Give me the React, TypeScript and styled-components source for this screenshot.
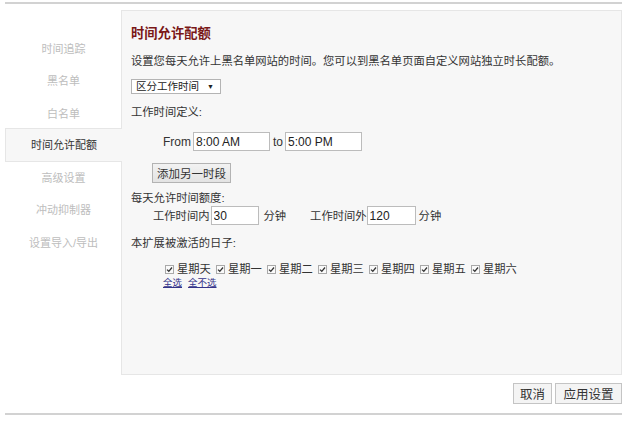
import React from "react";
import styled, { createGlobalStyle } from "styled-components";

const Global = createGlobalStyle`
  html, body { margin: 0; padding: 0; background: #fff; }
  body { font-family: "Liberation Sans", "Noto Sans CJK SC", sans-serif; color: #333; font-size: 11.3px; }
`;

const Page = styled.div`
  width: 617px;
  margin-left: 5px;
  padding-top: 2px;
`;

const Rule = styled.div`
  height: 0;
  border-top: 2px solid #d2d2d2;
`;

const Body = styled.div`
  display: flex;
  margin-top: 6px;
  height: 365px;
`;

const Sidebar = styled.nav`
  width: 116px;
  flex: none;
  padding-top: 22px;
  display: flex;
  flex-direction: column;
  position: relative;
  z-index: 1;
`;

const NavItem = styled.div<{ $active?: boolean }>`
  height: 32.4px;
  line-height: 32.4px;
  text-align: center;
  font-size: 11px;
  color: ${(p) => (p.$active ? "#333" : "#bdbdbd")};
  background: ${(p) => (p.$active ? "#f7f7f7" : "transparent")};
  border: 1px solid ${(p) => (p.$active ? "#e6e6e6" : "transparent")};
  border-right: none;
  margin-right: ${(p) => (p.$active ? "-1px" : "0")};
  box-sizing: border-box;
  ${(p) => p.$active && "height: 34px; line-height: 32px; margin-top: -1px; margin-bottom: -1.2px;"}
`;

const Panel = styled.section`
  flex: 1;
  background: #f7f7f7;
  border: 1px solid #e6e6e6;
  padding: 12px 10px 0 9px;
  box-sizing: border-box;
`;

const Title = styled.h2`
  margin: 0;
  font-size: 13.3px;
  line-height: 20px;
  font-weight: bold;
  color: #7a1717;
  font-family: "Noto Sans CJK SC", sans-serif;
`;

const Line = styled.div<{ $mt: number; $indent?: number }>`
  margin-top: ${(p) => p.$mt}px;
  padding-left: ${(p) => p.$indent ?? 0}px;
  line-height: 16px;
  display: flex;
  align-items: center;
  white-space: nowrap;
`;

const SelectBox = styled.div`
  margin-top: 10px;
  width: 90px;
  height: 15px;
  box-sizing: border-box;
  border: 1px solid #b4b4b4;
  background: #fff;
  display: flex;
  align-items: center;
  justify-content: space-between;
  padding: 0 6px 0 4px;
  font-size: 10.5px;
  line-height: 13px;
  color: #222;
`;

const Arrow = styled.span`
  font-size: 7px;
  color: #222;
`;

const TextInput = styled.input<{ $w: number }>`
  width: ${(p) => p.$w}px;
  height: 19px;
  box-sizing: border-box;
  border: 1px solid #bcbcbc;
  background: #fff;
  padding: 0 2px;
  font-family: "Liberation Sans", "Noto Sans CJK SC", sans-serif;
  font-size: 12px;
  color: #222;
  margin: 0;
  outline: none;
`;

const Label = styled.span<{ $ml?: number; $mr?: number; $latin?: boolean }>`
  margin-left: ${(p) => p.$ml ?? 0}px;
  margin-right: ${(p) => p.$mr ?? 0}px;
  font-size: ${(p) => (p.$latin ? "12px" : "inherit")};
`;

const GrayButton = styled.button<{ $w: number }>`
  width: ${(p) => p.$w}px;
  height: 20px;
  padding: 0;
  border: 1px solid #b3b3b3;
  background: linear-gradient(#f2f2f2, #e3e3e3);
  font-family: "Noto Sans CJK SC", sans-serif;
  font-size: 11.5px;
  line-height: 18px;
  color: #333;
  cursor: pointer;
`;

const Days = styled.div`
  margin-top: 10px;
  padding-left: 34px;
  display: flex;
  gap: 6px;
  line-height: 16px;
`;

const Day = styled.label`
  display: flex;
  align-items: center;
  gap: 3px;
  width: 45px;
  white-space: nowrap;
`;

const Check = styled.span`
  width: 9px;
  height: 9px;
  box-sizing: border-box;
  border: 1px solid #a9a9a9;
  background: #fafafa;
  display: inline-flex;
  align-items: center;
  justify-content: center;
`;

const Links = styled.div`
  padding-left: 32px;
  display: flex;
  gap: 6px;
  font-size: 9.5px;
  line-height: 12px;
`;

const Link = styled.a`
  color: #34348a;
  text-decoration: underline;
`;

const Footer = styled.div`
  display: flex;
  justify-content: flex-end;
  gap: 3px;
  margin-top: 8px;
  margin-bottom: 9px;
`;

const FootButton = styled.button<{ $w: number }>`
  width: ${(p) => p.$w}px;
  height: 21px;
  padding: 0;
  border: 1px solid #c4c4c4;
  background: #f4f4f4;
  font-family: "Noto Sans CJK SC", sans-serif;
  font-size: 12.5px;
  line-height: 19px;
  color: #333;
`;

const navItems = ["时间追踪", "黑名单", "白名单", "时间允许配额", "高级设置", "冲动抑制器", "设置导入/导出"];
const days = ["星期天", "星期一", "星期二", "星期三", "星期四", "星期五", "星期六"];

function CheckMark() {
  return (
    <Check>
      <svg width="7" height="7" viewBox="0 0 7 7">
        <path d="M1 3.6 L2.8 5.3 L6 1.5" stroke="#333" strokeWidth="1.3" fill="none" />
      </svg>
    </Check>
  );
}

export default function App() {
  return (
    <Page>
      <Global />
      <Rule />
      <Body>
        <Sidebar>
          {navItems.map((n) => (
            <NavItem key={n} $active={n === "时间允许配额"}>
              {n}
            </NavItem>
          ))}
        </Sidebar>
        <Panel>
          <Title>时间允许配额</Title>
          <Line $mt={10}>设置您每天允许上黑名单网站的时间。您可以到黑名单页面自定义网站独立时长配额。</Line>
          <SelectBox>
            <span>区分工作时间</span>
            <Arrow>▼</Arrow>
          </SelectBox>
          <Line $mt={10}>工作时间定义:</Line>
          <Line $mt={12} $indent={32}>
            <Label $mr={2} $latin>From</Label>
            <TextInput $w={77} defaultValue="8:00 AM" />
            <Label $ml={3} $mr={2} $latin>to</Label>
            <TextInput $w={77} defaultValue="5:00 PM" />
          </Line>
          <Line $mt={12} $indent={21}>
            <GrayButton $w={79}>添加另一时段</GrayButton>
          </Line>
          <Line $mt={7}>每天允许时间额度:</Line>
          <Line $mt={0} $indent={22}>
            <Label $mr={1}>工作时间内</Label>
            <TextInput $w={48} defaultValue="30" />
            <Label $ml={5}>分钟</Label>
            <Label $ml={24} $mr={0}>工作时间外</Label>
            <TextInput $w={49} defaultValue="120" />
            <Label $ml={3}>分钟</Label>
          </Line>
          <Line $mt={10}>本扩展被激活的日子:</Line>
          <Days>
            {days.map((d) => (
              <Day key={d}>
                <CheckMark />
                {d}
              </Day>
            ))}
          </Days>
          <Links>
            <Link href="#">全选</Link>
            <Link href="#">全不选</Link>
          </Links>
        </Panel>
      </Body>
      <Footer>
        <FootButton $w={39}>取消</FootButton>
        <FootButton $w={67}>应用设置</FootButton>
      </Footer>
      <Rule />
    </Page>
  );
}
